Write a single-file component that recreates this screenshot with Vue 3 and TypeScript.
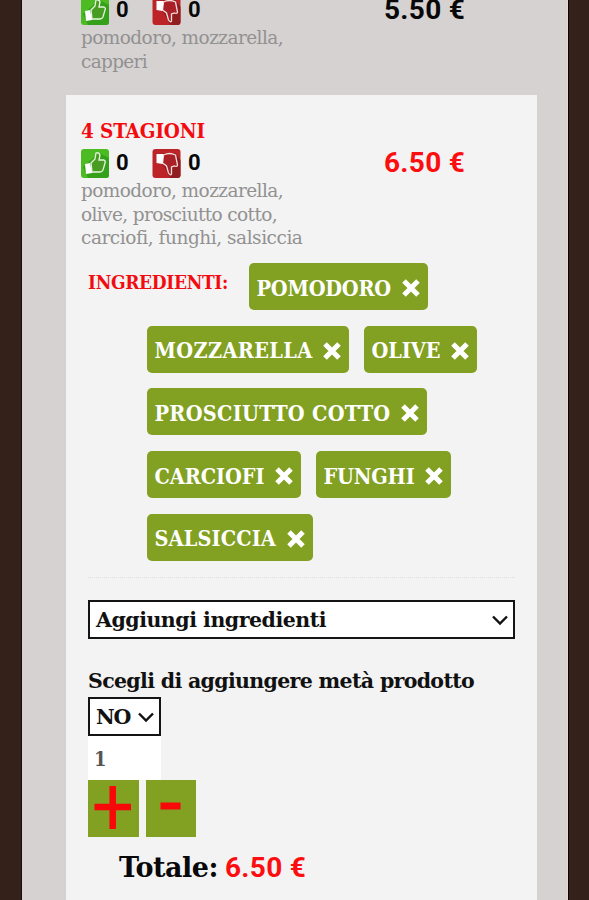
<script setup lang="ts">
import { ref, type Directive } from 'vue'

interface Chip { name: string; width: number }

const rows = ref<Chip[][]>([
  [{ name: 'POMODORO', width: 134.5 }],
  [{ name: 'MOZZARELLA', width: 158 }, { name: 'OLIVE', width: 69 }],
  [{ name: 'PROSCIUTTO COTTO', width: 236 }],
  [{ name: 'CARCIOFI', width: 110 }, { name: 'FUNGHI', width: 91 }],
  [{ name: 'SALSICCIA', width: 121.5 }],
])
const quantity = ref(1)

function remove(row: Chip[], index: number) {
  row.splice(index, 1)
}

// Tracks a line of text so that it fills the given width in pixels.
const vFit: Directive<HTMLElement, number> = {
  mounted(el, { value }) {
    const count = (el.textContent ?? '').length
    const natural = el.getBoundingClientRect().width
    el.style.letterSpacing = `${(value - natural) / count}px`
  },
}
</script>

<template>
  <main class="page">
    <section class="product first">
      <div class="summary">
        <div class="votes">
          <svg class="thumb" viewBox="0 0 28 29"><rect width="28" height="29" rx="3" fill="#4dbb22" /><path d="M2 18 18 4 28 9V26q0 3-3 3H7z" fill="#35a01a" /><path d="M10 14 14 10 15 4Q18 3 19 6L18 11H23Q25 12 24 14L22 21Q21 23 19 23H11z" fill="#499c22" stroke="#e6f5df" stroke-width="1.300" /><path d="M4 15 9 14 11 24 5 25z" fill="#fff" /></svg>
          <span class="count">0</span>
          <svg class="thumb down" viewBox="0 0 28 29"><rect width="28" height="29" rx="3" fill="#bd2428" /><path d="M4 5 23 4 28 11V26q0 3-3 3H18z" fill="#911d21" /><path d="M11 6Q17 3 23 6L25 16Q25 18 22 17L19 18 19 25Q18 27 16 24L14 17 10 14z" fill="#a92026" stroke="#f6dede" stroke-width="1.300" /><path d="M4 5 11 5 10 15 4 14z" fill="#fff" /></svg>
          <span class="count">0</span>
        </div>
        <p class="desc"><span v-fit="202">pomodoro, mozzarella,</span><br /><span v-fit="66">capperi</span></p>
      </div>
      <strong class="price">5.50 €</strong>
    </section>

    <article class="card">
      <section class="product">
        <div class="summary">
          <h2 class="name"><span v-fit="124">4 STAGIONI</span></h2>
          <div class="votes">
            <svg class="thumb" viewBox="0 0 28 29"><rect width="28" height="29" rx="3" fill="#4dbb22" /><path d="M2 18 18 4 28 9V26q0 3-3 3H7z" fill="#35a01a" /><path d="M10 14 14 10 15 4Q18 3 19 6L18 11H23Q25 12 24 14L22 21Q21 23 19 23H11z" fill="#499c22" stroke="#e6f5df" stroke-width="1.300" /><path d="M4 15 9 14 11 24 5 25z" fill="#fff" /></svg>
            <span class="count">0</span>
            <svg class="thumb down" viewBox="0 0 28 29"><rect width="28" height="29" rx="3" fill="#bd2428" /><path d="M4 5 23 4 28 11V26q0 3-3 3H18z" fill="#911d21" /><path d="M11 6Q17 3 23 6L25 16Q25 18 22 17L19 18 19 25Q18 27 16 24L14 17 10 14z" fill="#a92026" stroke="#f6dede" stroke-width="1.300" /><path d="M4 5 11 5 10 15 4 14z" fill="#fff" /></svg>
            <span class="count">0</span>
          </div>
          <p class="desc"><span v-fit="202">pomodoro, mozzarella,</span><br /><span v-fit="196">olive, prosciutto cotto,</span><br /><span v-fit="221">carciofi, funghi, salsiccia</span></p>
        </div>
        <strong class="price red">6.50 €</strong>
      </section>

      <section class="options">
        <div class="ingredients">
          <div v-for="(row, r) in rows" :key="r" class="chip-row" :class="{ lead: r === 0 }">
            <span v-if="r === 0" class="label"><span v-fit="140">INGREDIENTI:</span></span>
            <button v-for="(chip, i) in row" :key="chip.name" class="chip" @click="remove(row, i)">
              <span v-fit="chip.width">{{ chip.name }}</span>
              <svg class="cross" viewBox="0 0 20 20"><path d="M3 3 17 17M17 3 3 17" stroke="#fff" stroke-width="5" /></svg>
            </button>
          </div>
        </div>
        <div class="select wide">
          <span v-fit="230">Aggiungi ingredienti</span>
          <svg class="chevron" viewBox="0 0 16 11"><path d="M1 1.5 8 8.5 15 1.5" fill="none" stroke="#111" stroke-width="2.4" /></svg>
        </div>
        <p class="half"><span v-fit="386">Scegli di aggiungere metà prodotto</span></p>
        <div class="select small">
          <span v-fit="34">NO</span>
          <svg class="chevron" viewBox="0 0 16 11"><path d="M1 1.5 8 8.5 15 1.5" fill="none" stroke="#111" stroke-width="2.4" /></svg>
        </div>
        <input v-model="quantity" class="quantity" type="text" />
        <div class="steps">
          <button class="step plus" @click="quantity++"><svg viewBox="0 0 51 56"><path d="M6.500 26H43M24.700 5V48" stroke="#f80808" stroke-width="6.500" /></svg></button>
          <button class="step minus" @click="quantity--"><svg viewBox="0 0 50 56"><path d="M14.500 25H34.500" stroke="#f80808" stroke-width="7" /></svg></button>
        </div>
        <p class="total"><span v-fit="99">Totale:</span><strong class="sum">6.50 €</strong></p>
      </section>
    </article>
  </main>
</template>

<style>
body {
  margin: 0;
  background: #33211a;
}
</style>

<style scoped>
* {
  box-sizing: border-box;
}
.page {
  width: 547px;
  height: 900px;
  margin-left: 21px;
  padding: 0 29px 0 43px;
  overflow: hidden;
  background: #d6d2d1;
  border-left: 1px solid #1b0e09;
  border-right: 1px solid #e5d6cf;
  box-shadow: 1px 0 #0c0402;
  font-family: "Roboto Slab", "DejaVu Serif", serif;
  font-stretch: condensed;
  white-space: nowrap;
}
p, h2 {
  margin: 0;
}
.product {
  display: flex;
  align-items: flex-start;
  padding-left: 15px;
}
.first {
  height: 95px;
  padding-left: 16px;
  padding-top: 0;
}
.first .summary,
.first .price {
  margin-top: -4px;
}
.summary {
  width: 303px;
}
.name {
  height: 33px;
  line-height: 31px;
  font-size: 20.5px;
  color: #f40b10;
}
.votes {
  display: flex;
  align-items: center;
  height: 29px;
}
.thumb {
  width: 28px;
  height: 29px;
}
.count {
  width: 43px;
  padding-left: 7px;
  margin-top: -3px;
  font: 700 22px/29px Roboto, sans-serif;
  color: #080808;
}
.thumb.down {
  width: 29px;
}
.desc {
  height: 72px;
  padding-top: 1px;
  font-size: 18.5px;
  font-stretch: normal;
  line-height: 23.7px;
  color: #929191;
}
.price {
  font: 700 28px/27px Roboto, sans-serif;
  letter-spacing: 0.3px;
  color: #080808;
}
.card {
  width: 471px;
  height: 805px;
  margin-left: 1px;
  padding-top: 21px;
  background: #f3f3f3;
}
.card .price {
  margin-top: 33px;
}
.card .red,
.sum {
  color: #fb0d10;
}
.options {
  padding: 13px 22px 0;
}
.ingredients {
  display: flex;
  flex-direction: column;
  gap: 15.7px;
  height: 315px;
  border-bottom: 1px dotted #dcdcdc;
}
.chip-row {
  display: flex;
  gap: 15px;
  height: 47px;
  padding-left: 59px;
}
.chip-row.lead {
  padding-left: 0;
  gap: 0;
}
.label {
  width: 161px;
  padding-top: 4px;
  font-size: 19px;
  line-height: 30px;
  font-weight: 700;
  color: #f40b10;
}
.chip {
  display: flex;
  align-items: center;
  gap: 9.5px;
  height: 47px;
  padding: 3px 7px 0 7.5px;
  border: 0;
  border-radius: 5px;
  background: #82a021;
  color: #fff;
  font-family: inherit;
  font-stretch: inherit;
  font-size: 21.5px;
  font-weight: 700;
}
.cross {
  width: 20px;
  height: 20px;
}
.select {
  display: flex;
  align-items: center;
  justify-content: space-between;
  height: 39px;
  padding: 1px 5px 0 6px;
  border: 2px solid #141414;
  background: #fff;
  color: #111;
  font-size: 20.5px;
  font-stretch: normal;
  font-weight: 700;
}
.wide {
  width: 427px;
  margin-top: 22px;
}
.chevron {
  width: 16px;
  height: 11px;
}
.half {
  height: 58px;
  padding-top: 26px;
  font-size: 20.5px;
  font-stretch: normal;
  line-height: 32px;
  font-weight: 700;
  color: #111;
}
.small {
  width: 73px;
}
.quantity {
  display: block;
  width: 73px;
  height: 44px;
  padding: 2px 0 0 6px;
  border: 0;
  background: #fff;
  color: #555;
  font-family: inherit;
  font-stretch: inherit;
  font-size: 20px;
  font-weight: 700;
}
.steps {
  display: flex;
  gap: 7px;
}
.step {
  width: 51px;
  height: 57px;
  padding: 0;
  border: 0;
  background: #82a021;
}
.step svg {
  display: block;
  width: 100%;
  height: 56px;
}
.minus {
  width: 50px;
}
.total {
  display: flex;
  padding: 13px 0 0 31px;
  font-size: 27px;
  font-stretch: normal;
  line-height: 36px;
  font-weight: 700;
  color: #080808;
}
.sum {
  padding-left: 7px;
  font: 700 28px/36px Roboto, sans-serif;
  letter-spacing: 0.3px;
}
</style>
